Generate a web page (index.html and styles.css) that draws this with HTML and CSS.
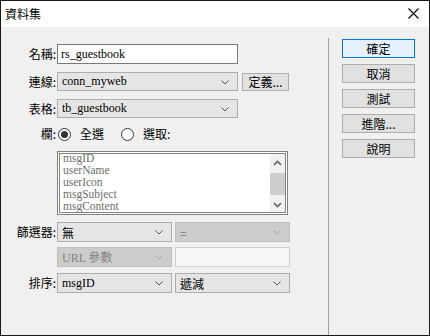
FILE: index.html
```html
<!DOCTYPE html>
<html lang="zh-TW">
<head>
    <meta charset="UTF-8">
    <title>資料集</title>
    <link rel="stylesheet" href="styles.css">
</head>
<body>
    <div class="window">
        <!-- 標題列 -->
        <div class="titlebar">
            <span class="title">資料集</span>
            <svg class="close" width="11" height="11" viewBox="0 0 11 11">
                <path d="M0.5 0.5 L10.5 10.5 M10.5 0.5 L0.5 10.5" stroke="#000" stroke-width="1.1" fill="none"/>
            </svg>
        </div>

        <div class="content">
            <div class="form">
                <div class="row row-name">
                    <label class="lbl">名稱:</label>
                    <div class="input name-input">rs_guestbook</div>
                </div>

                <div class="row row-conn">
                    <label class="lbl">連線:</label>
                    <div class="select wide">
                        <span>conn_myweb</span>
                        <svg class="chev" width="8" height="5" viewBox="0 0 8 5"><polyline points="0.5,0.5 4,4 7.5,0.5" fill="none" stroke="#555" stroke-width="1"/></svg>
                    </div>
                    <div class="btn small">定義...</div>
                </div>

                <div class="row row-table">
                    <label class="lbl">表格:</label>
                    <div class="select wide">
                        <span>tb_guestbook</span>
                        <svg class="chev" width="8" height="5" viewBox="0 0 8 5"><polyline points="0.5,0.5 4,4 7.5,0.5" fill="none" stroke="#555" stroke-width="1"/></svg>
                    </div>
                </div>

                <div class="row row-radio">
                    <label class="lbl">欄:</label>
                    <span class="radio checked"></span>
                    <span class="radio-text">全選</span>
                    <span class="radio"></span>
                    <span class="radio-text">選取:</span>
                </div>

                <div class="row row-list">
                    <div class="listbox">
                        <ul class="items">
                            <li>msgID</li>
                            <li>userName</li>
                            <li>userIcon</li>
                            <li>msgSubject</li>
                            <li>msgContent</li>
                        </ul>
                        <div class="scrollbar">
                            <svg width="9" height="6" viewBox="0 0 9 6"><polyline points="1,5 4.5,1.5 8,5" fill="none" stroke="#606060" stroke-width="1.6"/></svg>
                            <div class="thumb"></div>
                            <svg width="9" height="6" viewBox="0 0 9 6"><polyline points="1,1 4.5,4.5 8,1" fill="none" stroke="#606060" stroke-width="1.6"/></svg>
                        </div>
                    </div>
                </div>

                <div class="row row-filter">
                    <label class="lbl">篩選器:</label>
                    <div class="select half">
                        <span class="cjk">無</span>
                        <svg class="chev" width="8" height="5" viewBox="0 0 8 5"><polyline points="0.5,0.5 4,4 7.5,0.5" fill="none" stroke="#555" stroke-width="1"/></svg>
                    </div>
                    <div class="select half disabled">
                        <span class="cjk">=</span>
                        <svg class="chev" width="8" height="5" viewBox="0 0 8 5"><polyline points="0.5,0.5 4,4 7.5,0.5" fill="none" stroke="#aaa" stroke-width="1"/></svg>
                    </div>
                </div>

                <div class="row row-url">
                    <div class="select half disabled">
                        <span>URL 參數</span>
                        <svg class="chev" width="8" height="5" viewBox="0 0 8 5"><polyline points="0.5,0.5 4,4 7.5,0.5" fill="none" stroke="#aaa" stroke-width="1"/></svg>
                    </div>
                    <div class="input half-input disabled-input"></div>
                </div>

                <div class="row row-sort">
                    <label class="lbl">排序:</label>
                    <div class="select half">
                        <span>msgID</span>
                        <svg class="chev" width="8" height="5" viewBox="0 0 8 5"><polyline points="0.5,0.5 4,4 7.5,0.5" fill="none" stroke="#555" stroke-width="1"/></svg>
                    </div>
                    <div class="select half">
                        <span class="cjk">遞減</span>
                        <svg class="chev" width="8" height="5" viewBox="0 0 8 5"><polyline points="0.5,0.5 4,4 7.5,0.5" fill="none" stroke="#555" stroke-width="1"/></svg>
                    </div>
                </div>
            </div>

            <div class="sep"></div>

            <!-- 右側按鈕 -->
            <div class="actions">
                <div class="btn main default">確定</div>
                <div class="btn main">取消</div>
                <div class="btn main">測試</div>
                <div class="btn main">進階...</div>
                <div class="btn main">說明</div>
            </div>
        </div>
    </div>
</body>
</html>
```

FILE: styles.css
```css
/* 基礎樣式 */
* {
    box-sizing: border-box;
}

body {
    margin: 0;
    font-family: "Noto Sans CJK TC", "Liberation Sans", sans-serif;
    font-size: 12px;
    color: #000;
    background: #f0f0f0;
}

.window {
    width: 430px;
    height: 336px;
    border: 1px solid #1a1a1a;
    background: #f0f0f0;
    display: flex;
    flex-direction: column;
}

.titlebar {
    height: 26px;
    background: #fff;
    display: flex;
    align-items: center;
    justify-content: space-between;
    padding: 0 10px 1px 4px;
}

.title {
    font-size: 12px;
    line-height: 1;
}

.content {
    flex: 1;
    display: flex;
}

.form {
    width: 327px;
    padding-top: 17px;
    display: flex;
    flex-direction: column;
}

.row {
    display: flex;
    align-items: center;
    padding-left: 56px;
}

.lbl {
    width: 56px;
    margin-left: -56px;
    text-align: right;
    padding-right: 1px;
    line-height: 1;
}

.row-conn { margin-top: 8px; }
.row-table { margin-top: 8px; }
.row-radio { margin-top: 8px; height: 16px; }
.row-list { margin-top: 9px; }
.row-filter { margin-top: 7px; }
.row-url { margin-top: 5px; }
.row-sort { margin-top: 6px; }

/* 輸入欄位 */
.input {
    height: 20px;
    background: #fff;
    border: 1px solid #7a7a7a;
    font-family: "Liberation Serif", "Noto Sans CJK TC", serif;
    font-size: 12px;
    line-height: 18px;
    padding-left: 3px;
}

.name-input {
    width: 181px;
}

.half-input {
    width: 115px;
    margin-left: 3px;
}

.disabled-input {
    background: #f7f7f7;
    border-color: #cfcfcf;
}

/* 下拉選單 */
.select {
    height: 19px;
    background: #e5e5e5;
    border: 1px solid #adadad;
    display: flex;
    align-items: center;
    justify-content: space-between;
    padding: 0 8px 0 4px;
    font-family: "Liberation Serif", "Noto Sans CJK TC", serif;
    font-size: 12px;
}

.select .cjk {
    font-family: "Noto Sans CJK TC", sans-serif;
}

.select.wide {
    width: 181px;
}

.select.half {
    width: 115px;
    height: 20px;
}

.select.half + .select.half {
    margin-left: 3px;
}

.select.disabled {
    background: #cccccc;
    border-color: #bfbfbf;
    color: #838383;
}

.chev {
    margin-top: 1px;
}

/* 按鈕 */
.btn {
    background: #e1e1e1;
    border: 1px solid #adadad;
    display: flex;
    align-items: center;
    justify-content: center;
    font-size: 12px;
    line-height: 1;
}

.btn.small {
    width: 47px;
    height: 18px;
    margin-left: 4px;
}

.btn.default {
    background: #e5f1fb;
    border-color: #0078d7;
}

/* 單選 */
.radio {
    width: 13px;
    height: 13px;
    border: 1px solid #333;
    border-radius: 50%;
    background: #fff;
    margin-left: 1px;
    display: flex;
    align-items: center;
    justify-content: center;
}

.radio.checked::after {
    content: "";
    width: 7px;
    height: 7px;
    border-radius: 50%;
    background: #333;
}

.radio-text {
    margin-left: 9px;
    margin-right: 16px;
    line-height: 1;
}

/* 清單 */
.listbox {
    width: 231px;
    height: 64px;
    border: 3px double #828282;
    background: #fff;
    display: flex;
    justify-content: space-between;
    overflow: hidden;
}

.items {
    list-style: none;
    margin: -2px 0 0;
    padding: 0 0 0 3px;
    font-family: "Liberation Serif", serif;
    font-size: 11.5px;
    line-height: 12px;
    color: #6d6d6d;
}

.scrollbar {
    width: 15px;
    background: #f0f0f0;
    display: flex;
    flex-direction: column;
    align-items: center;
    justify-content: space-between;
    padding: 6px 0 4px;
}

.thumb {
    width: 15px;
    height: 22px;
    background: #cdcdcd;
}

/* 分隔線 */
.sep {
    width: 1px;
    margin-top: 11px;
    background: #a0a0a0;
}

.actions {
    padding: 12px 0 0 13px;
    display: flex;
    flex-direction: column;
    gap: 6px;
}

.btn.main {
    width: 73px;
    height: 19px;
}
```
